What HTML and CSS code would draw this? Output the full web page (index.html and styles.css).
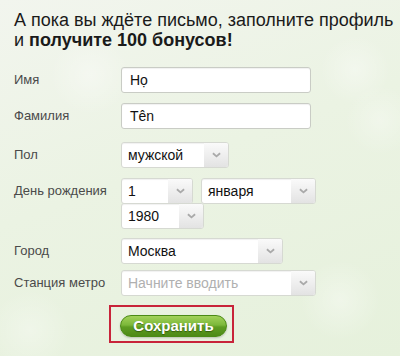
FILE: index.html
```html
<!DOCTYPE html>
<html lang="ru">
<head>
<meta charset="utf-8">
<title>Профиль</title>
<link rel="stylesheet" href="styles.css">
</head>
<body>
<div class="page">
  <h1 class="title">А пока вы ждёте письмо, заполните профиль<br>и <b>получите 100 бонусов!</b></h1>

  <div class="form">
    <div class="row row-name">
      <div class="label">Имя</div>
      <div class="input w-full">Họ</div>
    </div>
    <div class="row row-surname">
      <div class="label">Фамилия</div>
      <div class="input w-full">Tên</div>
    </div>
    <div class="row row-sex">
      <div class="label">Пол</div>
      <div class="select w-sex"><span class="val">мужской</span><span class="arrow"><svg viewBox="0 0 10 6" width="9" height="6"><path d="M1 1 L5 4.5 L9 1" fill="none" stroke="#a9a9a9" stroke-width="2"/></svg></span></div>
    </div>
    <div class="row row-birth">
      <div class="label">День рождения</div>
      <div class="birth">
        <div class="birth-top">
          <div class="select w-day"><span class="val">1</span><span class="arrow"><svg viewBox="0 0 10 6" width="9" height="6"><path d="M1 1 L5 4.5 L9 1" fill="none" stroke="#a9a9a9" stroke-width="2"/></svg></span></div>
          <div class="select w-month"><span class="val">января</span><span class="arrow"><svg viewBox="0 0 10 6" width="9" height="6"><path d="M1 1 L5 4.5 L9 1" fill="none" stroke="#a9a9a9" stroke-width="2"/></svg></span></div>
        </div>
        <div class="select w-year year"><span class="val">1980</span><span class="arrow"><svg viewBox="0 0 10 6" width="9" height="6"><path d="M1 1 L5 4.5 L9 1" fill="none" stroke="#a9a9a9" stroke-width="2"/></svg></span></div>
      </div>
    </div>
    <div class="row row-city">
      <div class="label">Город</div>
      <div class="select w-city"><span class="val">Москва</span><span class="arrow"><svg viewBox="0 0 10 6" width="9" height="6"><path d="M1 1 L5 4.5 L9 1" fill="none" stroke="#a9a9a9" stroke-width="2"/></svg></span></div>
    </div>
    <div class="row row-metro">
      <div class="label">Станция метро</div>
      <div class="select w-metro"><span class="val placeholder">Начните вводить</span><span class="arrow"><svg viewBox="0 0 10 6" width="9" height="6"><path d="M1 1 L5 4.5 L9 1" fill="none" stroke="#a9a9a9" stroke-width="2"/></svg></span></div>
    </div>
  </div>

  <div class="actions">
    <div class="highlight">
      <button class="save">Сохранить</button>
    </div>
  </div>
</div>
</body>
</html>
```
FILE: styles.css
```css
html, body {
  margin: 0;
  padding: 0;
}
body {
  width: 400px;
  height: 356px;
  overflow: hidden;
  font-family: "Liberation Sans", Arial, sans-serif;
  color: #222;
  background:
    radial-gradient(circle at 90px 75px, rgba(255,255,255,0.35) 0, rgba(255,255,255,0) 40px),
    radial-gradient(circle at 355px 70px, rgba(255,255,255,0.35) 0, rgba(255,255,255,0) 35px),
    radial-gradient(circle at 380px 120px, rgba(255,255,255,0.3) 0, rgba(255,255,255,0) 35px),
    radial-gradient(circle at 340px 300px, rgba(255,255,255,0.35) 0, rgba(255,255,255,0) 40px),
    radial-gradient(circle at 30px 330px, rgba(255,255,255,0.3) 0, rgba(255,255,255,0) 40px),
    linear-gradient(160deg, #f2f5ee 0%, #ebf3e3 45%, #e6f1dc 100%);
}
.page {
  padding: 10px 0 0 0;
}
.title {
  margin: 0;
  padding-left: 14px;
  font-size: 18px;
  line-height: 20px;
  font-weight: normal;
  color: #1a1a1a;
  white-space: nowrap;
}
.title b {
  font-weight: bold;
}
.form {
  margin-top: 17px;
}
.row {
  display: grid;
  grid-template-columns: 121px auto;
  align-items: start;
}
.row-surname { margin-top: 10px; }
.row-sex { margin-top: 13px; }
.row-birth { margin-top: 10px; }
.row-city { margin-top: 9px; }
.row-metro { margin-top: 6px; }

.label {
  padding-left: 14px;
  font-size: 13px;
  line-height: 26px;
  color: #4a4a4a;
  white-space: nowrap;
}
.input, .select {
  box-sizing: border-box;
  height: 26px;
  background: #fff;
  border: 1px solid #d6d9d2;
  border-radius: 3px;
  font-size: 14px;
  line-height: 24px;
  color: #111;
  box-shadow: inset 0 1px 1px rgba(0,0,0,0.06);
}
.input {
  padding-left: 8px;
  border-color: #c9ccc5;
}
.w-full { width: 190px; }
.select {
  display: flex;
  overflow: hidden;
}
.select .val {
  flex: 1;
  padding-left: 6px;
  white-space: nowrap;
  overflow: hidden;
}
.select .placeholder {
  color: #b0b0b0;
}
.select .arrow {
  width: 24px;
  flex: none;
  display: flex;
  align-items: center;
  justify-content: center;
  background: linear-gradient(to bottom, #fafafa, #e3e3e3);
}
.w-sex { width: 108px; }
.w-day { width: 72px; }
.w-month { width: 115px; }
.w-year { width: 83px; }
.w-city { width: 162px; }
.w-metro { width: 195px; }
.birth-top {
  display: flex;
  gap: 8px;
}
.year {
  margin-top: -1px;
}
.actions {
  margin-top: 9px;
  padding-left: 109px;
}
.highlight {
  box-sizing: border-box;
  width: 125px;
  height: 38px;
  border: 2px solid #c8243a;
  padding: 8px 0 0 9px;
}
.save {
  display: block;
  box-sizing: border-box;
  width: 107px;
  height: 22px;
  margin: 0;
  padding: 0;
  border: 1px solid #4b8a16;
  border-radius: 11px;
  background: linear-gradient(to bottom, #a2d25a 0%, #7cb83a 45%, #5e9d22 55%, #4e8a16 100%);
  color: #fff;
  font-family: "Liberation Sans", Arial, sans-serif;
  font-size: 15px;
  font-weight: bold;
  line-height: 20px;
  text-shadow: 0 1px 1px rgba(40,70,10,0.7);
  box-shadow: 0 1px 2px rgba(0,0,0,0.2);
}
```
